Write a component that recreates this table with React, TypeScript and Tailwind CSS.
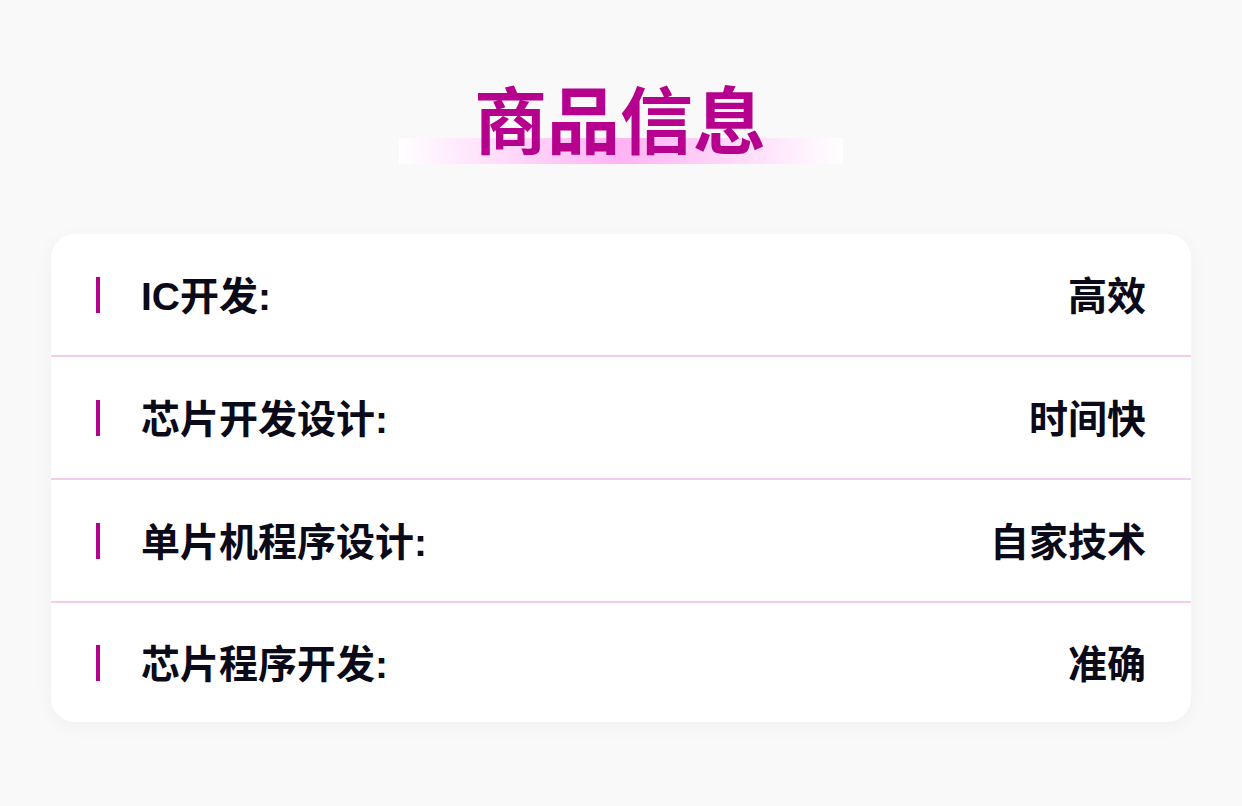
const rows = [
  { label: "IC开发:", value: "高效" },
  { label: "芯片开发设计:", value: "时间快" },
  { label: "单片机程序设计:", value: "自家技术" },
  { label: "芯片程序开发:", value: "准确" },
];

export default function App() {
  return (
    <div
      className="min-h-[806px] w-full bg-[#f9f9f9] px-[51px] pt-[83px]"
      style={{ fontFamily: '"Liberation Sans", "Noto Sans CJK SC", sans-serif' }}
    >
      {/* Title with soft highlight bar */}
      <div className="flex justify-center">
        <div className="relative flex h-[81px] w-[444px] justify-center">
          <span className="absolute bottom-0 left-0 h-[26px] w-full bg-[linear-gradient(90deg,#ffffff_0%,#ffe0fa_20%,#ffb3f3_50%,#ffe0fa_80%,#ffffff_100%)]" />
          <h1 className="relative ml-[-2px] mt-[3px] text-[73px] font-bold leading-none text-[#b6008e]">
            商品信息
          </h1>
        </div>
      </div>

      {/* Info card */}
      <div className="mt-[70px] overflow-hidden rounded-[24px] bg-white shadow-[0_4px_20px_rgba(0,0,0,0.04)]">
        {rows.map((row, i) => (
          <div
            key={row.label}
            className={
              i < rows.length - 1
                ? "flex h-[123px] items-center border-b-2 border-[#f3cdec] px-[45px]"
                : "flex h-[119px] items-center px-[45px]"
            }
          >
            <span className="h-[36px] w-[4px] bg-[#b6008e]" />
            <span className="ml-[41px] pt-[4px] text-[39px] font-bold leading-none text-[#0a0a18]">
              {row.label}
            </span>
            <span className="ml-auto pt-[4px] text-[39px] font-bold leading-none text-[#0a0a18]">
              {row.value}
            </span>
          </div>
        ))}
      </div>
    </div>
  );
}
